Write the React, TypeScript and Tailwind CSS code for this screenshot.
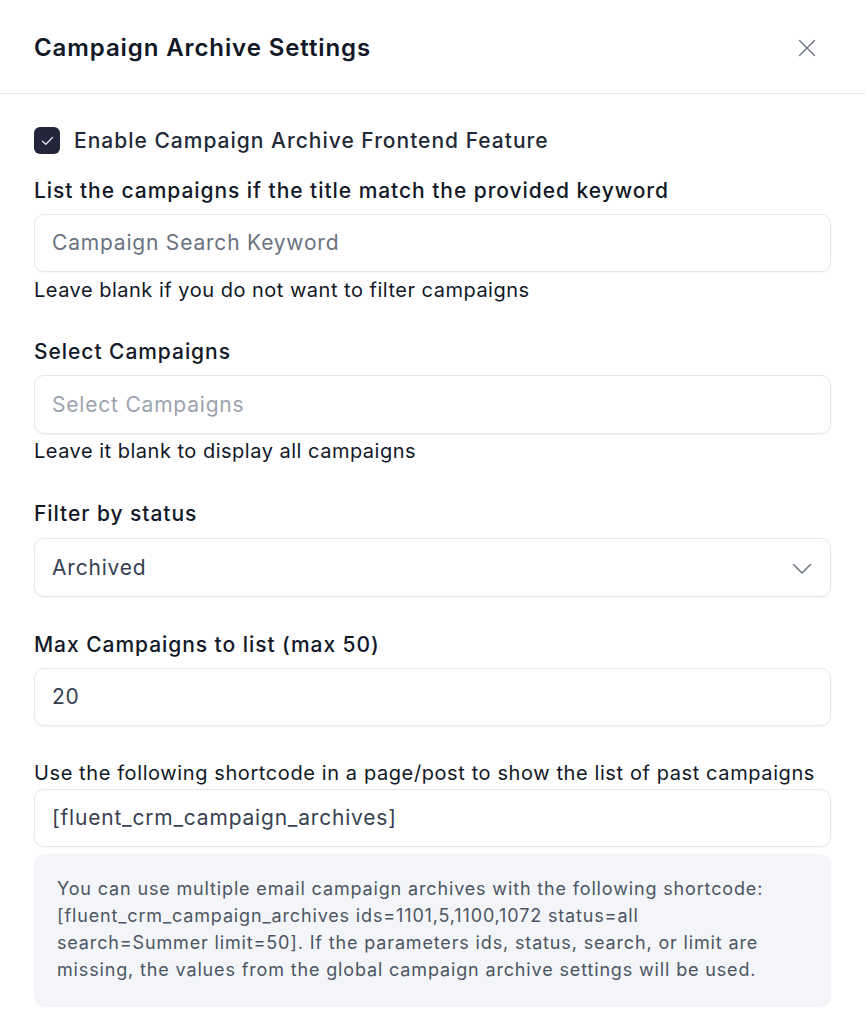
import React from "react";

const font = { fontFamily: "Inter, 'Noto Sans', sans-serif" };

const Field: React.FC<{ value: string; muted?: "placeholder" | "light" | "value"; chevron?: boolean; className?: string }> = ({
  value,
  muted = "value",
  chevron,
  className = "",
}) => {
  const color =
    muted === "placeholder" ? "text-[#6b7280]" : muted === "light" ? "text-[#9ca3af]" : "text-[#374151]";
  return (
    <div
      className={`flex items-center justify-between h-[58px] px-[17px] rounded-[10px] border border-[#e5e7eb] bg-white shadow-[0_1px_2px_rgba(0,0,0,0.04)] ${className}`}
    >
      <span className={`text-[21px] tracking-[0.8px] ${color}`}>{value}</span>
      {chevron && (
        <svg width="20" height="12" viewBox="0 0 20 12" fill="none" className="mr-[1px] mt-[3px]">
          <path d="M1.5 1.5 L10 10 L18.5 1.5" stroke="#6b7280" strokeWidth="1.5" strokeLinecap="round" strokeLinejoin="round" />
        </svg>
      )}
    </div>
  );
};

const labelCls = "text-[21px] leading-[28px] font-medium tracking-[0.95px] text-[#111827]";
const helpCls = "text-[20px] leading-[24px] tracking-[0.5px] text-[#111827]";

const App: React.FC = () => {
  return (
    <div className="w-[865px] min-h-[1024px] bg-white text-[#1f2937]" style={font}>
      {/* Header */}
      <div className="h-[94px] px-[34px] flex items-center justify-between border-b border-[#e5e7eb]">
        <h2 className="text-[24px] font-semibold text-[#111827] tracking-[0.9px] mt-[2px]">Campaign Archive Settings</h2>
        <button className="mr-[15px] mt-[2px] text-[#6b7280]">
          <svg width="18" height="18" viewBox="0 0 18 18" fill="none">
            <path d="M1.5 1.5 L16.5 16.5 M16.5 1.5 L1.5 16.5" stroke="currentColor" strokeWidth="1.4" strokeLinecap="round" />
          </svg>
        </button>
      </div>

      {/* Body */}
      <div className="px-[34px] pt-[33px]">
        <label className="flex items-center gap-[14px] h-[27px]">
          <span className="w-[26px] h-[27px] rounded-[6px] bg-[#23263a] flex items-center justify-center">
            <svg width="13" height="10" viewBox="0 0 13 10" fill="none">
              <path d="M1.5 5.2 L4.8 8.3 L11.5 1.5" stroke="#e5e7eb" strokeWidth="1.3" strokeLinecap="round" strokeLinejoin="round" />
            </svg>
          </span>
          <span className="text-[21px] font-medium tracking-[1px] text-[#1f2937]">Enable Campaign Archive Frontend Feature</span>
        </label>

        <div className={`mt-[23px] ${labelCls}`}>List the campaigns if the title match the provided keyword</div>
        <Field className="mt-[9px]" value="Campaign Search Keyword" muted="placeholder" />
        <div className={`mt-[6px] ${helpCls}`}>Leave blank if you do not want to filter campaigns</div>

        <div className={`mt-[36px] ${labelCls}`}>Select Campaigns</div>
        <Field className="mt-[9px] h-[59px]" value="Select Campaigns" muted="light" />
        <div className={`mt-[5px] ${helpCls}`}>Leave it blank to display all campaigns</div>

        <div className={`mt-[37px] ${labelCls}`}>Filter by status</div>
        <Field className="mt-[10px] h-[59px]" value="Archived" chevron />

        <div className={`mt-[34px] ${labelCls}`}>Max Campaigns to list (max 50)</div>
        <Field className="mt-[9px] h-[57px]" value="20" />

        <div className="mt-[33px] text-[20px] leading-[28px] tracking-[0.6px] text-[#111827]">
          Use the following shortcode in a page/post to show the list of past campaigns
        </div>
        <Field className="mt-[2px] h-[57px]" value="[fluent_crm_campaign_archives]" />

        <div className="mt-[7px] rounded-[10px] bg-[#f4f5f8] pl-[23px] pr-[2px] pt-[21px] pb-[24px]">
          <p className="text-[18px] leading-[27px] tracking-[0.85px] text-[#4b5563] whitespace-nowrap">
            You can use multiple email campaign archives with the following shortcode:
            <br />
            [fluent_crm_campaign_archives ids=1101,5,1100,1072 status=all
            <br />
            search=Summer limit=50]. If the parameters ids, status, search, or limit are
            <br />
            missing, the values from the global campaign archive settings will be used.
          </p>
        </div>
      </div>
    </div>
  );
};

export default App;
